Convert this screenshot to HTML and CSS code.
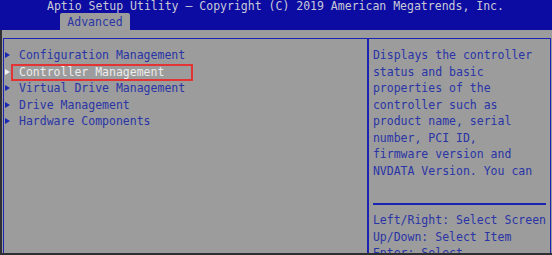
FILE: index.html
```
<!DOCTYPE html>
<html lang="en">
<head>
    <meta charset="UTF-8">
    <title>Aptio Setup Utility</title>
    <link rel="stylesheet" href="styles.css">
</head>
<body>
    <div class="screen">
        <div class="header">
            <div class="title">Aptio Setup Utility – Copyright (C) 2019 American Megatrends, Inc.</div>
            <div class="tabs">
                <span class="tab">Advanced</span>
            </div>
        </div>
        <div class="band"></div>

        <div class="frame">
            <div class="menu">
                <div class="item">Configuration Management</div>
                <div class="item selected">Controller Management</div>
                <div class="item">Virtual Drive Management</div>
                <div class="item">Drive Management</div>
                <div class="item">Hardware Components</div>
                <div class="mark"></div>
            </div>
            <div class="help">
                <div class="help-text">
                    Displays the controller<br>
                    status and basic<br>
                    properties of the<br>
                    controller such as<br>
                    product name, serial<br>
                    number, PCI ID,<br>
                    firmware version and<br>
                    NVDATA Version. You can
                </div>
                <div class="blank"></div>
                <div class="rule"></div>
                <div class="keys">
                    Left/Right: Select Screen<br>
                    Up/Down: Select Item<br>
                    Enter: Select
                </div>
            </div>
        </div>
    </div>
</body>
</html>
```

FILE: styles.css
```
html, body {
    margin: 0;
    padding: 0;
}
body {
    width: 552px;
    height: 255px;
    background: #2e2e33;
    font-family: "DejaVu Sans Mono", monospace;
    font-size: 11.5px;
    overflow: hidden;
}
.screen {
    margin-left: 2px;
    height: 253px;
    background: #9c9c9c;
    display: flex;
    flex-direction: column;
}
.header {
    background: #0c0ca2;
    height: 30px;
    margin-left: -2px;
    display: flex;
    flex-direction: column;
}
.title {
    color: #c9c9d6;
    height: 13px;
    line-height: 13px;
    padding-left: 47px;
    white-space: nowrap;
}
.tabs {
    display: flex;
    padding-left: 60px;
    margin-top: auto;
}
.tab {
    background: #9c9c9c;
    color: #2a34a6;
    width: 70px;
    height: 17px;
    line-height: 18px;
    text-align: center;
    border-radius: 2px 2px 0 0;
}
.band {
    height: 8px;
}
.frame {
    flex: 1;
    margin-left: 1px;
    margin-right: 1px;
    border: 1px solid #1a24b0;
    border-bottom: none;
    display: flex;
    overflow: hidden;
    color: #2a34a6;
    line-height: 16.5px;
}
.menu {
    width: 363px;
    border-right: 2px solid #1a24b0;
    padding-top: 8px;
    position: relative;
}
.item {
    padding-left: 15px;
    position: relative;
    white-space: nowrap;
}
.item::before {
    content: "";
    position: absolute;
    left: 1px;
    top: 5px;
    border-left: 5px solid #1c28b4;
    border-top: 3.5px solid transparent;
    border-bottom: 3.5px solid transparent;
}
.item.selected {
    color: #ececec;
}
.item.selected::before {
    border-left-color: #f2f2f2;
}
.mark {
    position: absolute;
    left: 7px;
    top: 25px;
    width: 178px;
    height: 13px;
    border: 2px solid #e23434;
}
.help {
    flex: 1;
    padding: 8px 4px 0 4px;
    white-space: nowrap;
}
.blank {
    height: 16.5px;
}
.rule {
    height: 16.5px;
    position: relative;
}
.rule::after {
    content: "";
    position: absolute;
    left: 0;
    right: 0;
    top: 7px;
    border-top: 2px solid #1a24b0;
}
```
